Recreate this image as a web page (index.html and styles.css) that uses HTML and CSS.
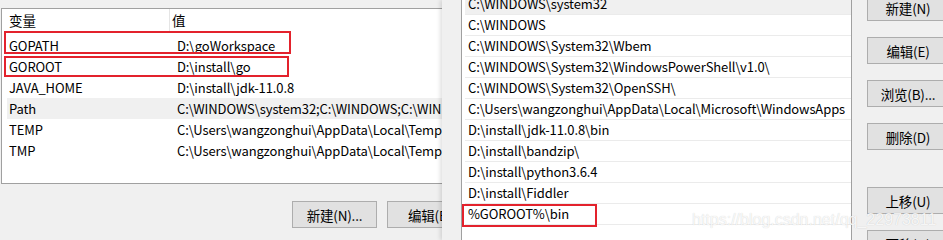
FILE: index.html
```html
<!DOCTYPE html>
<html lang="zh-CN">
<head>
  <meta charset="UTF-8">
  <title>环境变量</title>
  <link rel="stylesheet" href="styles.css">
</head>
<body>

<div class="desk">

  <!-- 系统变量窗口 -->
  <div class="env-window">
    <div class="var-list">
      <div class="var-head">
        <span class="col-name">变量</span>
        <span class="col-value">值</span>
      </div>
      <div class="var-row"><span>GOPATH</span><span>D:\goWorkspace</span></div>
      <div class="var-row"><span>GOROOT</span><span>D:\install\go</span></div>
      <div class="var-row"><span>JAVA_HOME</span><span>D:\install\jdk-11.0.8</span></div>
      <div class="var-row hover"><span>Path</span><span>C:\WINDOWS\system32;C:\WINDOWS;C:\WIN</span></div>
      <div class="var-row"><span>TEMP</span><span>C:\Users\wangzonghui\AppData\Local\Temp</span></div>
      <div class="var-row"><span>TMP</span><span>C:\Users\wangzonghui\AppData\Local\Temp</span></div>

      <div class="mark mark-gopath"></div>
      <div class="mark mark-goroot"></div>
    </div>

    <div class="btn-row">
      <button class="win-btn">新建(N)...</button>
      <button class="win-btn">编辑(E)</button>
    </div>
  </div>

  <!-- 编辑环境变量窗口 -->
  <div class="path-window">
    <div class="path-list">
      <div class="path-row selected">C:\WINDOWS\system32</div>
      <div class="path-row">C:\WINDOWS</div>
      <div class="path-row">C:\WINDOWS\System32\Wbem</div>
      <div class="path-row">C:\WINDOWS\System32\WindowsPowerShell\v1.0\</div>
      <div class="path-row">C:\WINDOWS\System32\OpenSSH\</div>
      <div class="path-row">C:\Users\wangzonghui\AppData\Local\Microsoft\WindowsApps</div>
      <div class="path-row">D:\install\jdk-11.0.8\bin</div>
      <div class="path-row">D:\install\bandzip\</div>
      <div class="path-row">D:\install\python3.6.4</div>
      <div class="path-row">D:\install\Fiddler</div>
      <div class="path-row">%GOROOT%\bin</div>
      <div class="path-row"></div>

      <div class="mark mark-bin"></div>
    </div>

    <div class="side-btns">
      <button class="win-btn">新建(N)</button>
      <button class="win-btn">编辑(E)</button>
      <button class="win-btn">浏览(B)...</button>
      <button class="win-btn">删除(D)</button>
      <button class="win-btn spaced">上移(U)</button>
      <button class="win-btn">下移(O)</button>
    </div>
  </div>

  <div class="watermark">https://blog.csdn.net/qq_22973811</div>
</div>

</body>
</html>
```

FILE: styles.css
```css
body {
  margin: 0;
  width: 943px;
  height: 240px;
  overflow: hidden;
  background-color: #f0f0f0;
  font-family: "Noto Sans CJK SC", "Liberation Sans", sans-serif;
  font-size: 13px;
  letter-spacing: -0.1px;
  color: #000;
}
.desk {
  position: relative;
  width: 943px;
  height: 240px;
  overflow: hidden;
}

/* left window */
.env-window {
  padding-top: 8px;
}
.var-list {
  position: relative;
  margin-left: 1px;
  width: 520px;
  height: 176px;
  background-color: #fff;
  border: 1px solid #a0a0a0;
  box-sizing: border-box;
}
.var-head {
  display: grid;
  grid-template-columns: 168px 1fr;
  height: 24px;
  line-height: 23px;
  padding-left: 5px;
  margin-bottom: 2px;
  font-size: 13.5px;
}
.var-head span {
  padding-left: 2px;
}
.var-head .col-name {
  border-right: 1px solid #e5e5e5;
  margin-right: 5px;
  height: 24px;
}
.var-head .col-value {
  margin-left: -5px;
}
.var-row {
  display: grid;
  grid-template-columns: 168px 1fr;
  height: 21px;
  line-height: 21px;
  margin-left: 5px;
  white-space: nowrap;
  overflow: hidden;
}
.var-row span {
  padding-left: 2px;
  overflow: hidden;
}
.var-row.hover {
  background-color: #f0f0f0;
}
.btn-row {
  display: flex;
  gap: 10px;
  padding: 17px 0 0 292px;
}
.win-btn {
  width: 85px;
  height: 27px;
  background-color: #e1e1e1;
  border: 1px solid #adadad;
  font-family: "Noto Sans CJK SC", "Liberation Sans", sans-serif;
  font-size: 13.5px;
  letter-spacing: -0.2px;
  color: #000;
  padding: 0;
  flex-shrink: 0;
}

/* red annotation boxes */
.mark {
  position: absolute;
  border: 2px solid #e3222c;
  box-sizing: border-box;
}
.mark-gopath {
  left: 2px;
  top: 22px;
  width: 287px;
  height: 23px;
}
.mark-goroot {
  left: 2px;
  top: 47px;
  width: 285px;
  height: 21px;
}

/* right window */
.path-window {
  position: absolute;
  left: 442px;
  top: 0;
  width: 501px;
  height: 240px;
  background-color: #f0f0f0;
  box-shadow: -2px 0 4px rgba(0, 0, 0, 0.12);
  display: flex;
  gap: 15px;
  padding-left: 19px;
  box-sizing: border-box;
}
.path-list {
  position: relative;
  width: 391px;
  height: 260px;
  margin-top: -6px;
  flex-shrink: 0;
  background-color: #fff;
  border: 1px solid #a0a0a0;
  border-top: none;
  box-sizing: border-box;
  padding-left: 3px;
}
.path-row {
  height: 21px;
  line-height: 20px;
  padding-left: 3px;
  border-bottom: 1px solid #ebebeb;
  box-sizing: border-box;
  white-space: nowrap;
}
.path-row.selected {
  background-color: #f0f0f0;
}
.mark-bin {
  left: 0;
  top: 210px;
  width: 135px;
  height: 23px;
}
.side-btns {
  display: flex;
  flex-direction: column;
  gap: 16px;
  margin-top: -6px;
}
.side-btns .win-btn {
  width: 82px;
}
.side-btns .spaced {
  margin-top: 21px;
}

.watermark {
  position: absolute;
  left: 692px;
  top: 208px;
  font-family: "Liberation Sans", sans-serif;
  font-size: 16px;
  line-height: 24px;
  letter-spacing: 0;
  color: rgba(255, 255, 255, 0.85);
  text-shadow: 0 0 1px rgba(0, 0, 0, 0.2);
  white-space: nowrap;
}
```
